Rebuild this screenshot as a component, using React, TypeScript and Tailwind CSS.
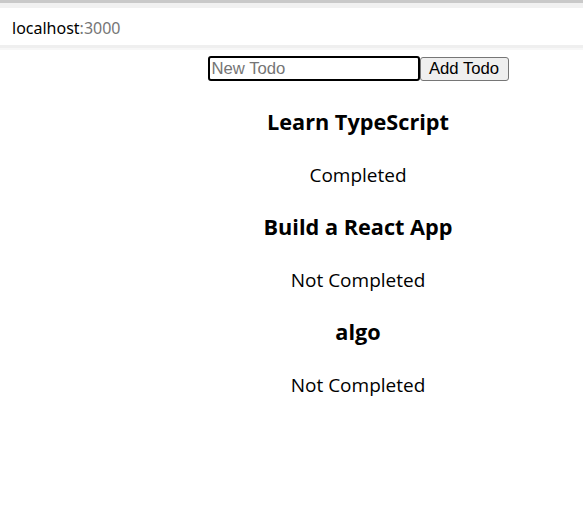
const todos = [
  { id: 1, title: 'Learn TypeScript', completed: true },
  { id: 2, title: 'Build a React App', completed: false },
  { id: 3, title: 'algo', completed: false },
]

function AddressBar() {
  return (
    <div className="h-[50px] bg-white">
      <div className="h-[3px] bg-[#c9c9c9]" />
      <div className="h-[5px] bg-[#f1f1f1]" />
      <div className="flex h-[37px] items-center pl-3 pt-[2px] font-['Noto_Sans',sans-serif] text-[16px] text-black">
        localhost<span className="text-[#767676]">:3000</span>
      </div>
      <div className="h-[3px] bg-[#efefef]" />
      <div className="h-[2px] bg-[#f7f7f7]" />
    </div>
  )
}

export default function App() {
  return (
    <div className="min-h-[511px] bg-white">
      <AddressBar />
      <div className="flex flex-col items-center pl-[133px] font-['Open_Sans',sans-serif] text-black">
        <div className="mt-[6px] flex items-start">
          <input
            placeholder="New Todo"
            className="h-[25px] w-[212px] rounded-[3px] border-2 border-black px-[2px] font-['Liberation_Sans',Arial,sans-serif] text-[16.7px] outline-none placeholder:text-[#757575]"
          />
          <button className="mt-[1px] h-[24px] w-[89px] rounded-[3px] border border-[#767676] bg-[#efefef] font-['Liberation_Sans',Arial,sans-serif] text-[16.7px] leading-none">
            Add Todo
          </button>
        </div>
        <div className="mt-[25px] flex flex-col items-center gap-[23.4px]">
          {todos.map((todo) => (
            <div key={todo.id} className="contents">
              <h3 className="text-[21.7px] font-bold leading-[31px]">{todo.title}</h3>
              <p className="mt-[2px] -mb-[2px] text-[19px] leading-[27px]">
                {todo.completed ? 'Completed' : 'Not Completed'}
              </p>
            </div>
          ))}
        </div>
      </div>
    </div>
  )
}
